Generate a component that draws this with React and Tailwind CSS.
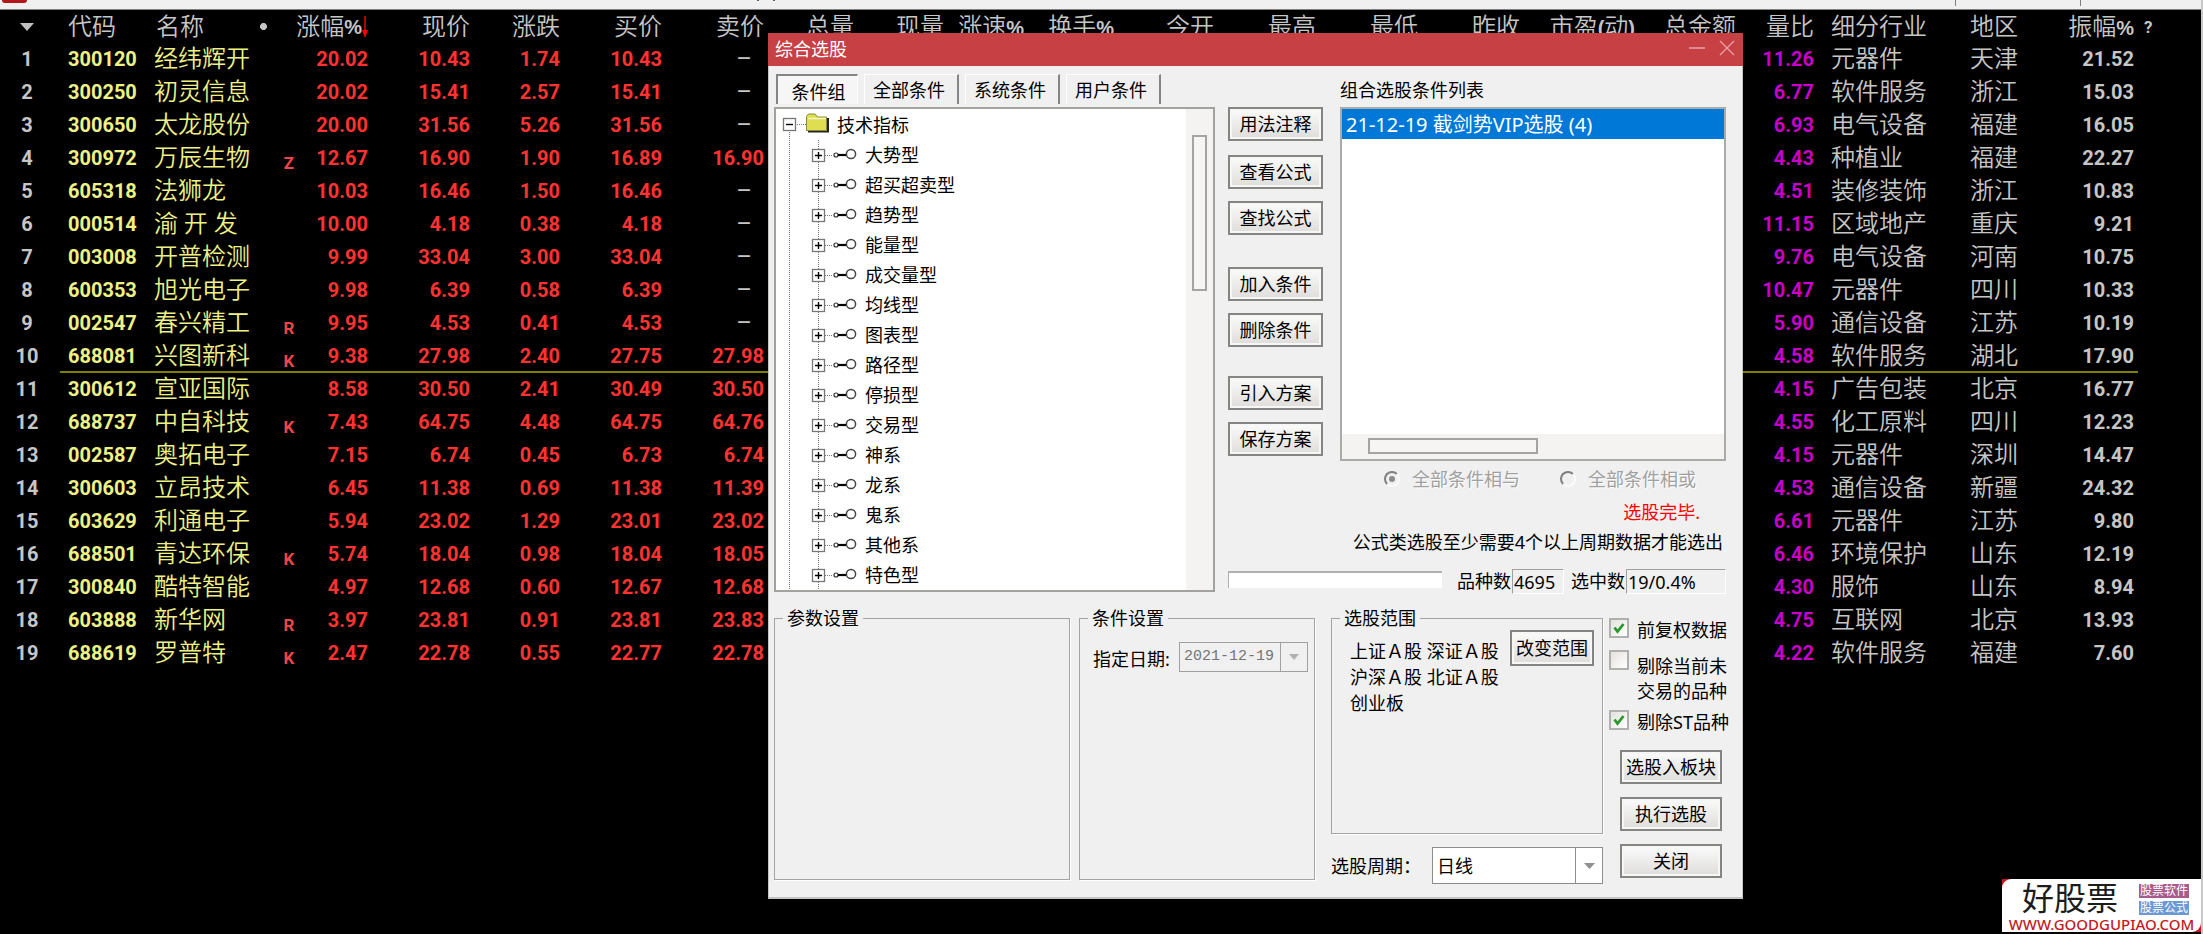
import React from "react";

const STOCKS = [
  ["300120", "经纬辉开", "", "20.02", "10.43", "1.74", "10.43", "", "11.26", "元器件", "天津", "21.52"],
  ["300250", "初灵信息", "", "20.02", "15.41", "2.57", "15.41", "", "6.77", "软件服务", "浙江", "15.03"],
  ["300650", "太龙股份", "", "20.00", "31.56", "5.26", "31.56", "", "6.93", "电气设备", "福建", "16.05"],
  ["300972", "万辰生物", "Z", "12.67", "16.90", "1.90", "16.89", "16.90", "4.43", "种植业", "福建", "22.27"],
  ["605318", "法狮龙", "", "10.03", "16.46", "1.50", "16.46", "", "4.51", "装修装饰", "浙江", "10.83"],
  ["000514", "渝 开 发", "", "10.00", "4.18", "0.38", "4.18", "", "11.15", "区域地产", "重庆", "9.21"],
  ["003008", "开普检测", "", "9.99", "33.04", "3.00", "33.04", "", "9.76", "电气设备", "河南", "10.75"],
  ["600353", "旭光电子", "", "9.98", "6.39", "0.58", "6.39", "", "10.47", "元器件", "四川", "10.33"],
  ["002547", "春兴精工", "R", "9.95", "4.53", "0.41", "4.53", "", "5.90", "通信设备", "江苏", "10.19"],
  ["688081", "兴图新科", "K", "9.38", "27.98", "2.40", "27.75", "27.98", "4.58", "软件服务", "湖北", "17.90"],
  ["300612", "宣亚国际", "", "8.58", "30.50", "2.41", "30.49", "30.50", "4.15", "广告包装", "北京", "16.77"],
  ["688737", "中自科技", "K", "7.43", "64.75", "4.48", "64.75", "64.76", "4.55", "化工原料", "四川", "12.23"],
  ["002587", "奥拓电子", "", "7.15", "6.74", "0.45", "6.73", "6.74", "4.15", "元器件", "深圳", "14.47"],
  ["300603", "立昂技术", "", "6.45", "11.38", "0.69", "11.38", "11.39", "4.53", "通信设备", "新疆", "24.32"],
  ["603629", "利通电子", "", "5.94", "23.02", "1.29", "23.01", "23.02", "6.61", "元器件", "江苏", "9.80"],
  ["688501", "青达环保", "K", "5.74", "18.04", "0.98", "18.04", "18.05", "6.46", "环境保护", "山东", "12.19"],
  ["300840", "酷特智能", "", "4.97", "12.68", "0.60", "12.67", "12.68", "4.30", "服饰", "山东", "8.94"],
  ["603888", "新华网", "R", "3.97", "23.81", "0.91", "23.81", "23.83", "4.75", "互联网", "北京", "13.93"],
  ["688619", "罗普特", "K", "2.47", "22.78", "0.55", "22.77", "22.78", "4.22", "软件服务", "福建", "7.60"],
];
const SELECTED_ROW = 9;

const TREE_ITEMS = [
  "大势型", "超买超卖型", "趋势型", "能量型", "成交量型", "均线型", "图表型", "路径型",
  "停损型", "交易型", "神系", "龙系", "鬼系", "其他系", "特色型",
];

const cjk = "text-[24px] font-[350]";
const num = "text-[20px] font-bold";

function Pct({ children }) {
  return <span className="font-['Liberation_Sans',sans-serif] text-[20px] leading-none font-bold">{children}</span>;
}

function QuoteTable() {
  return (
    <table className="w-full table-fixed border-collapse whitespace-nowrap text-[#c6c6c6]">
      <colgroup>
        <col className="w-[60px]" />
        <col className="w-[94px]" />
        <col className="w-[124px]" />
        <col className="w-[22px]" />
        <col className="w-[68px]" />
        <col className="w-[102px]" />
        <col className="w-[90px]" />
        <col className="w-[102px]" />
        <col className="w-[102px]" />
        <col className="w-[90px]" />
        <col className="w-[90px]" />
        <col className="w-[80px]" />
        <col className="w-[90px]" />
        <col className="w-[100px]" />
        <col className="w-[102px]" />
        <col className="w-[102px]" />
        <col className="w-[102px]" />
        <col className="w-[115px]" />
        <col className="w-[101px]" />
        <col className="w-[78px]" />
        <col className="w-[156px]" />
        <col className="w-[70px]" />
        <col className="w-[98px]" />
        <col />
      </colgroup>
      <thead>
        <tr className={`h-[33px] text-right leading-[32px] ${cjk}`}>
          <th className="pr-1.5 font-[350]">
            <svg className="mx-auto" width="14" height="8" viewBox="0 0 14 8" aria-label="排序">
              <path d="M0 0H14L7 8Z" fill="#c0c0c0" />
            </svg>
          </th>
          <th className="pl-2 text-left font-[350]">代码</th>
          <th className="pl-0.5 text-left font-[350]">
            <span className="flex items-center">
              名称
              <svg className="ml-14" width="7" height="7" viewBox="0 0 8 8" aria-hidden="true">
                <path d="M2.500 0H5.500L8 2.500V5.500L5.500 8H2.500L0 5.500V2.500Z" fill="#c6c6c6" />
              </svg>
            </span>
          </th>
          <th colSpan={2} className="font-[350]">
            <span className="flex items-center justify-end">
              涨幅<Pct>%</Pct>
              <svg width="6" height="22" viewBox="0 0 6 22" aria-label="降序">
                <path d="M3 0V20" stroke="#f00" strokeWidth="1.4" />
                <path d="M0 14H6L3 22Z" fill="#f00" />
              </svg>
            </span>
          </th>
          <th className="font-[350]">现价</th>
          <th className="font-[350]">涨跌</th>
          <th className="font-[350]">买价</th>
          <th className="font-[350]">卖价</th>
          <th className="font-[350]">总量</th>
          <th className="font-[350]">现量</th>
          <th className="font-[350]">涨速<Pct>%</Pct></th>
          <th className="font-[350]">换手<Pct>%</Pct></th>
          <th className="font-[350]">今开</th>
          <th className="font-[350]">最高</th>
          <th className="font-[350]">最低</th>
          <th className="font-[350]">昨收</th>
          <th className="font-[350]">市盈<Pct>(</Pct>动<Pct>)</Pct></th>
          <th className="font-[350]">总金额</th>
          <th className="font-[350]">量比</th>
          <th className="pl-[17px] text-left font-[350]">细分行业</th>
          <th className="text-left font-[350]">地区</th>
          <th className="pr-1 font-[350]">振幅<Pct>%</Pct></th>
          <th className="pl-1.5 text-left text-[17px] font-bold">?</th>
        </tr>
      </thead>
      <tbody>
        {STOCKS.map((s, i) => {
          const line = i === SELECTED_ROW ? "shadow-[inset_0_-2px_0_#808000]" : "";
          return (
            <tr key={s[0]} className={`h-[33px] text-right leading-[33px] ${num}`}>
              <td className="pr-1.5 text-center">{i + 1}</td>
              <td className={`pl-2 text-left text-[#eef285] ${line}`}>{s[0]}</td>
              <td className={`text-left text-[24px] font-[350] text-[#eef285] ${line}`}>{s[1]}</td>
              <td className={`pt-2 text-center text-[17px] leading-5 text-[#f0444c] ${line}`}>{s[2]}</td>
              <td className={`text-[#ff3232] ${line}`}>{s[3]}</td>
              <td className={`text-[#ff3232] ${line}`}>{s[4]}</td>
              <td className={`text-[#ff3232] ${line}`}>{s[5]}</td>
              <td className={`text-[#ff3232] ${line}`}>{s[6]}</td>
              {s[7] ? (
                <td className={`text-[#ff3232] ${line}`}>{s[7]}</td>
              ) : (
                <td className={`pr-3 text-[24px] font-normal ${line}`}>–</td>
              )}
              <td colSpan={10} className={line}></td>
              <td className={`text-[#c800c8] ${line}`}>{s[8]}</td>
              <td className={`pl-[17px] text-left text-[24px] font-[350] ${line}`}>{s[9]}</td>
              <td className={`text-left text-[24px] font-[350] ${line}`}>{s[10]}</td>
              <td className={`pr-1 ${line}`}>{s[11]}</td>
              <td></td>
            </tr>
          );
        })}
      </tbody>
    </table>
  );
}

function PushButton({ children, className }) {
  return (
    <button
      type="button"
      className={`border-2 border-[#858583] bg-linear-to-b from-[#fbfbfb] to-[#dedddb] text-center leading-none whitespace-nowrap shadow-[inset_0_0_0_2px_#f7f7f5] ${className}`}
    >
      {children}
    </button>
  );
}

function TreeRootIcon() {
  return (
    <svg width="56" height="31" viewBox="0 0 56 31" aria-hidden="true">
      <path d="M13.5 23V31" stroke="#777" strokeDasharray="1 1" />
      <path d="M21 15.5H30" stroke="#777" strokeDasharray="1 1" />
      <rect x="7.5" y="9.5" width="12" height="12" fill="#fff" stroke="#777" strokeWidth="1.3" />
      <path d="M10 15.5H17" stroke="#000" strokeWidth="1.4" />
      <path d="M32 22.5H52V9" stroke="#222" strokeWidth="2" fill="none" />
      <path d="M30.500 21.500V7.500L32.500 5H39L41.500 8H50.500V21.500Z" fill="#dede50" stroke="#8a8a30" />
      <path d="M32 9.500H50" stroke="#f4f4c0" strokeWidth="1.500" />
    </svg>
  );
}

function TreeKeyIcon() {
  return (
    <svg width="84" height="30" viewBox="0 0 84 30" aria-hidden="true">
      <path d="M13.5 0V30M42.500 0V30M49 15.500H57" stroke="#777" strokeDasharray="1 1" fill="none" />
      <rect x="36.500" y="9.500" width="12" height="12" fill="#fff" stroke="#777" strokeWidth="1.3" />
      <path d="M39 15.500H46M42.500 12V19" stroke="#000" strokeWidth="1.4" fill="none" />
      <circle cx="60" cy="15" r="2" fill="#fff" stroke="#333" strokeWidth="1.200" />
      <path d="M62 15H70" stroke="#000" strokeWidth="2.200" />
      <circle cx="75" cy="14" r="4.600" fill="#fff" stroke="#444" strokeWidth="1.500" />
    </svg>
  );
}

function ConditionTree() {
  return (
    <div className="flex h-[485px] overflow-hidden border-2 border-[#a2a29e] bg-white">
      <ul className="flex-1">
        <li>
          <div className="flex h-[31px] items-center gap-[5px]">
            <TreeRootIcon />
            <span>技术指标</span>
          </div>
          <ul>
            {TREE_ITEMS.map((t) => (
              <li key={t} className="flex h-[30px] items-center gap-[5px]">
                <TreeKeyIcon />
                <span>{t}</span>
              </li>
            ))}
          </ul>
        </li>
      </ul>
      <div className="w-[27px] bg-[#f4f3f1] px-1.5 pt-[26px]">
        <div className="h-[156px] border-2 border-[#a4a4a2] bg-[#f6f5f3]"></div>
      </div>
    </div>
  );
}

function Tabs() {
  const tab = "h-[30px] w-[95px] border-t border-r-2 border-l border-t-white border-r-[#858583] border-l-white pr-1 leading-none";
  return (
    <div className="flex gap-1.5 pt-2 pb-[3px] pl-0.5" role="tablist">
      <button type="button" role="tab" aria-selected="true" className="h-[30px] w-[82px] border-t-2 border-r border-l-2 border-t-[#858583] border-r-white border-l-[#858583] bg-[#f6f6f6] pt-1 pl-0.5 leading-none">
        条件组
      </button>
      <button type="button" role="tab" aria-selected="false" className={tab}>全部条件</button>
      <button type="button" role="tab" aria-selected="false" className={tab}>系统条件</button>
      <button type="button" role="tab" aria-selected="false" className={tab}>用户条件</button>
    </div>
  );
}

function Radio({ id, label, checked }) {
  return (
    <span className="flex items-center gap-3 text-[#a0a0a0]">
      <span className="grid size-4 place-items-center">
        <input
          id={id}
          type="radio"
          name="combine"
          disabled
          defaultChecked={checked}
          className="size-4 appearance-none rounded-full border-2 border-t-[#808080] border-r-[#fafafa] border-b-[#fafafa] border-l-[#808080] [grid-area:1/1]"
        />
        {checked && <span className="size-1.5 rounded-full bg-[#8a8a8a] [grid-area:1/1]"></span>}
      </span>
      <label htmlFor={id} className="[text-shadow:1px_1px_0_#fff]">{label}</label>
    </span>
  );
}

function Check({ id, checked, children }) {
  return (
    <span className="flex items-start gap-2">
      <span className="grid size-5 place-items-center">
        <input
          id={id}
          type="checkbox"
          defaultChecked={checked}
          className="peer size-5 appearance-none border-2 border-[#b0b0ae] bg-linear-to-br from-[#e4e2de] to-white [grid-area:1/1]"
        />
        <svg className="pointer-events-none invisible peer-checked:visible [grid-area:1/1]" width="12" height="12" viewBox="0 0 12 12" aria-hidden="true">
          <path d="M1.500 5.500 4.500 9.500 10.500 2" stroke="#28982c" strokeWidth="2.800" fill="none" />
        </svg>
      </span>
      <label htmlFor={id} className="whitespace-nowrap">{children}</label>
    </span>
  );
}

const group = "min-w-0 border border-[#a4a4a4] shadow-[1px_1px_0_#fff]";
const groupTitle = "ml-2 px-1 leading-6";

function PickerDialog() {
  return (
    <section
      role="dialog"
      aria-label="综合选股"
      className="absolute top-[33px] left-[768px] w-[975px] bg-[#f0f0f0] text-[18px] leading-6 text-black"
    >
      <header className="flex h-[33px] items-center bg-[#c74044] pr-2 pl-[7px] text-white">
        <h1 className="flex-1 pb-0.5">综合选股</h1>
        <button type="button" aria-label="最小化" className="mb-1 px-2">
          <svg width="16" height="16" viewBox="0 0 16 16"><path d="M0 8H16" stroke="#e8a4a6" strokeWidth="1.500" /></svg>
        </button>
        <button type="button" aria-label="关闭窗口" className="mb-1 pl-1.5">
          <svg width="16" height="16" viewBox="0 0 16 16"><path d="M1 1 15 15M15 1 1 15" stroke="#e8a4a6" strokeWidth="1.300" /></svg>
        </button>
      </header>

      <div className="border-x border-b-2 border-[#c4c4c4] pl-[5px]">
        <div className="flex pr-4">
          <div className="w-[441px]">
            <Tabs />
            <ConditionTree />
          </div>

          <div className="ml-[13px] flex-1">
            <div className="flex gap-[17px]">
              <div className="flex w-[95px] flex-col gap-3 pt-[41px]">
                <PushButton className="h-[34px]">用法注释</PushButton>
                <PushButton className="mt-0.5 h-[34px]">查看公式</PushButton>
                <PushButton className="h-[34px]">查找公式</PushButton>
                <PushButton className="mt-5 h-[34px]">加入条件</PushButton>
                <PushButton className="h-[34px]">删除条件</PushButton>
                <PushButton className="mt-[17px] h-[34px]">引入方案</PushButton>
                <PushButton className="h-[34px]">保存方案</PushButton>
              </div>
              <div className="flex-1">
                <h2 className="pt-3 pb-[5px]">组合选股条件列表</h2>
                <div className="flex h-[354px] flex-col border-2 border-[#aaaaa8] bg-white">
                  <ul className="flex-1">
                    <li className="bg-[#0078d7] pt-px pl-1 text-[20px] leading-[29px] text-white">21-12-19 截剑势VIP选股 (4)</li>
                  </ul>
                  <div className="h-[25px] bg-[#f4f3f1] pt-1 pl-[26px]">
                    <div className="h-4 w-[170px] border-2 border-[#a4a4a2] bg-[#f6f5f3]"></div>
                  </div>
                </div>
              </div>
            </div>
            <div className="mt-1.5 flex justify-end gap-10 pr-[30px]">
              <Radio id="match-all" label="全部条件相与" checked />
              <Radio id="match-any" label="全部条件相或" />
            </div>
            <p className="mt-1.5 pr-[26px] text-right leading-[30px] text-[#f00]">选股完毕.</p>
            <p className="pr-[3px] text-right leading-[30px]">公式类选股至少需要4个以上周期数据才能选出</p>
            <div className="mt-3 flex items-start">
              <div role="progressbar" aria-label="选股进度" className="mt-0.5 h-[17px] w-[214px] border-t-2 border-l border-[#b0b0b0] bg-white"></div>
              <span className="ml-[15px]">品种数</span>
              <output className="ml-px h-[25px] w-[52px] border border-t-[#a0a0a0] border-r-white border-b-white border-l-[#a0a0a0] pl-px">4695</output>
              <span className="ml-[7px]">选中数</span>
              <output className="ml-px h-[25px] flex-1 border border-t-[#a0a0a0] border-r-white border-b-white border-l-[#a0a0a0] pl-px">19/0.4%</output>
            </div>
          </div>
        </div>

        <div className="flex items-start pt-3 pb-[13px]">
          <fieldset className={`h-[274px] w-[296px] ${group}`}>
            <legend className={groupTitle}>参数设置</legend>
          </fieldset>
          <fieldset className={`ml-[9px] h-[274px] w-[236px] ${group}`}>
            <legend className={groupTitle}>条件设置</legend>
            <div className="flex items-center pt-3 pl-[13px]">
              <label htmlFor="pick-date" className="w-[86px] pt-1">指定日期:</label>
              <div className="flex h-[30px] border border-[#a0a0a0]">
                <input
                  id="pick-date"
                  type="text"
                  disabled
                  defaultValue="2021-12-19"
                  className="w-[100px] pl-1 font-['Liberation_Mono','Noto_Sans_CJK_SC',monospace] text-[15px] text-[#747474]"
                />
                <button type="button" disabled aria-label="选择日期" className="grid w-[27px] place-items-center border-l border-[#a0a0a0]">
                  <svg width="10" height="6" viewBox="0 0 10 6"><path d="M0 0H10L5 6Z" fill="#b0b0b0" /></svg>
                </button>
              </div>
            </div>
          </fieldset>

          <div className="ml-4 w-[272px]">
            <fieldset className={`h-[228px] ${group}`}>
              <legend className={groupTitle}>选股范围</legend>
              <div className="flex items-start justify-between pr-2 pl-[18px]">
                <p className="pt-2 leading-[26px] whitespace-nowrap">
                  上证Ａ股 深证Ａ股<br />沪深Ａ股 北证Ａ股<br />创业板
                </p>
                <PushButton className="h-9 w-[84px]">改变范围</PushButton>
              </div>
            </fieldset>
            <div className="mt-[13px] flex items-center justify-between">
              <label htmlFor="period">选股周期：</label>
              <div className="grid w-[171px]">
                <select id="period" defaultValue="day" className="h-[37px] appearance-none border border-[#8c8c8c] bg-white pl-1 [grid-area:1/1]">
                  <option value="day">日线</option>
                </select>
                <span className="pointer-events-none grid h-[37px] w-7 place-items-center justify-self-end border-l border-[#8c8c8c] [grid-area:1/1]">
                  <svg width="11" height="6" viewBox="0 0 11 6" aria-hidden="true"><path d="M0 0H11L5.500 6Z" fill="#909090" /></svg>
                </span>
              </div>
            </div>
          </div>

          <div className="ml-1.5 flex flex-col pt-3">
            <Check id="adjusted" checked>前复权数据</Check>
            <div className="mt-2">
              <Check id="skip-halted">
                <span className="block pt-1 leading-[25px]">剔除当前未<br />交易的品种</span>
              </Check>
            </div>
            <div className="mt-1.5">
              <Check id="skip-st" checked>剔除ST品种</Check>
            </div>
            <div className="mt-4 ml-[11px] flex w-[102px] flex-col gap-[13px]">
              <PushButton className="h-[34px]">选股入板块</PushButton>
              <PushButton className="h-[34px]">执行选股</PushButton>
              <PushButton className="h-[34px]">关闭</PushButton>
            </div>
          </div>
        </div>
      </div>
    </section>
  );
}

function SiteBadge() {
  return (
    <a href="#site" className="absolute right-0 bottom-0.5 block h-[53px] w-[199px] bg-[#c8141c]">
      <span className="flex h-full flex-col rounded-tl-[9px] rounded-br-[9px] bg-white">
        <span className="flex h-[38px] items-start justify-between pr-3 pl-5">
          <span className="text-[32px] leading-[38px] text-[#1c1c1c]">好股票</span>
          <span className="flex flex-col gap-[3px] pt-[5px] text-[12px] leading-[14px] text-white">
            <span className="bg-[#a85c8a] px-px">股票软件</span>
            <span className="bg-[#6c98d4] px-px">股票公式</span>
          </span>
        </span>
        <span className="text-center text-[15px] leading-[15px] font-medium text-[#c41a22]">WWW.GOODGUPIAO.COM</span>
      </span>
    </a>
  );
}

export default function App() {
  return (
    <div className="relative min-h-screen overflow-hidden border-r-2 border-[#c8c8c8] bg-black font-['Noto_Sans','Noto_Sans_CJK_SC',sans-serif]">
      <div className="flex h-2.5 items-start border-b border-[#808080] bg-[#f0f0f0] pl-0.5">
        <span className="h-[3px] w-[25px] rounded-b-sm bg-[#b0181e]"></span>
        <span className="ml-[730px] h-px w-0.5 bg-[#606060]"></span>
        <span className="ml-[14px] h-px w-0.5 bg-[#606060]"></span>
        <span className="flex-1"></span>
        <span className="h-1.5 w-px bg-[#808080]"></span>
        <span className="mr-[120px] ml-[124px] h-1.5 w-px bg-[#808080]"></span>
      </div>
      <main className="font-[Roboto,'Noto_Sans_CJK_SC',sans-serif]">
        <QuoteTable />
      </main>
      <PickerDialog />
      <SiteBadge />
    </div>
  );
}
